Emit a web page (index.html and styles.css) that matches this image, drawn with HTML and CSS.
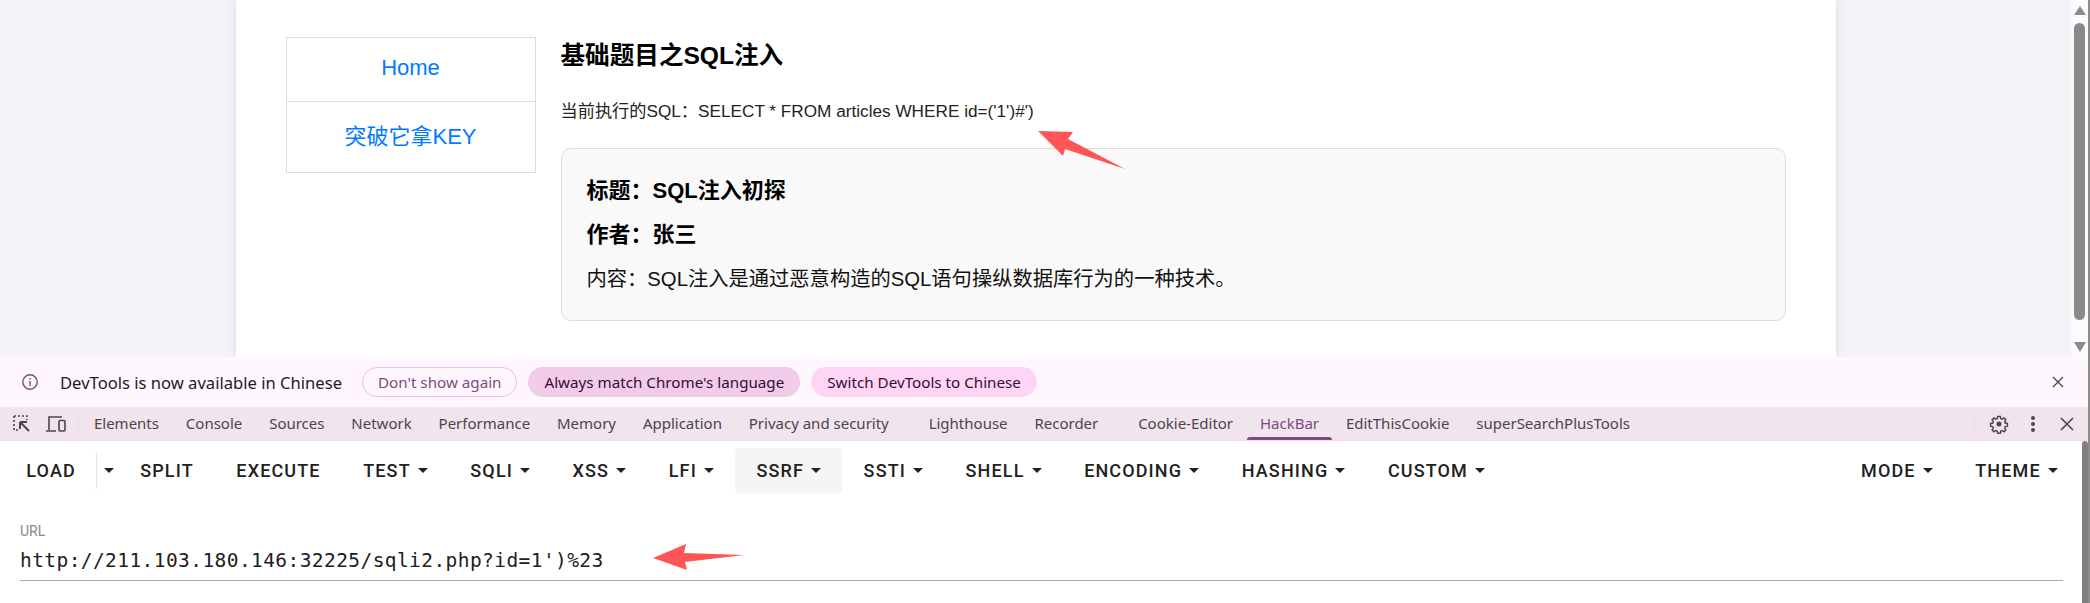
FILE: index.html
```html
<!DOCTYPE html>
<html lang="zh-CN">
<head>
    <meta charset="UTF-8">
    <title>SQL注入</title>
    <link rel="stylesheet" href="styles.css">
</head>
<body>
<div class="viewport">
    <div class="canvas">
        <div class="container">
            <ul class="nav">
                <li><a href="#">Home</a></li>
                <li><a href="#">突破它拿KEY</a></li>
            </ul>
            <div class="main">
                <h2 class="title">基础题目之SQL注入</h2>
                <p class="query">当前执行的SQL：SELECT * FROM articles WHERE id=('1')#')</p>
                <div class="card">
                    <h3>标题：SQL注入初探</h3>
                    <h3>作者：张三</h3>
                    <p>内容：SQL注入是通过恶意构造的SQL语句操纵数据库行为的一种技术。</p>
                </div>
            </div>
        </div>
    </div>
    <div class="pageScroll">
        <i class="arrowUp"></i>
        <i class="thumb"></i>
        <i class="arrowDown"></i>
    </div>
</div>

<div class="devtools">
    <div class="infobar">
        <svg class="infoIcon" width="18" height="18" viewBox="0 0 18 18" fill="none" stroke="#7e4b7e" stroke-width="1.4">
            <circle cx="9" cy="9" r="7.2"/>
            <path d="M9 8v5M9 5v1.6"/>
        </svg>
        <span class="infoText">DevTools is now available in Chinese</span>
        <button class="pill outline">Don't show again</button>
        <button class="pill dark">Always match Chrome's language</button>
        <button class="pill light">Switch DevTools to Chinese</button>
        <svg class="infoClose" width="12" height="12" viewBox="0 0 12 12" stroke="#4d444c" stroke-width="1.3">
            <path d="M1 1l10 10M11 1L1 11"/>
        </svg>
    </div>

    <div class="tabbar">
        <svg class="toolIcon" width="20" height="20" viewBox="0 0 20 20" fill="none" stroke="#4d444c" stroke-width="1.6">
            <path d="M2 2h13v4M2 2v14h4" stroke-dasharray="2 2"/>
            <path d="M8 8h7M8 8v7M8 8l9 9" stroke-width="2"/>
        </svg>
        <svg class="toolIcon device" width="22" height="20" viewBox="0 0 22 20" fill="none" stroke="#4d444c" stroke-width="1.6">
            <path d="M4 16V3h13M1 17h10"/>
            <rect x="14" y="6.5" width="6" height="10.5" rx="1"/>
        </svg>
        <i class="tabSep"></i>
        <a class="tab">Elements</a>
        <a class="tab">Console</a>
        <a class="tab">Sources</a>
        <a class="tab">Network</a>
        <a class="tab">Performance</a>
        <a class="tab">Memory</a>
        <a class="tab">Application</a>
        <a class="tab">Privacy and security</a>
        <a class="tab spaced">Lighthouse</a>
        <a class="tab">Recorder</a>
        <a class="tab spaced">Cookie-Editor</a>
        <a class="tab active">HackBar</a>
        <a class="tab">EditThisCookie</a>
        <a class="tab">superSearchPlusTools</a>
        <i class="tabSep end"></i>
        <svg class="gear" width="20" height="20" viewBox="0 0 24 24" fill="none" stroke="#4d444c" stroke-width="1.9">
            <path d="M10.2 2.5h3.6l.5 2.8 1.9.8 2.3-1.6 2.5 2.5-1.6 2.3.8 1.9 2.8.5v3.6l-2.8.5-.8 1.9 1.6 2.3-2.5 2.5-2.3-1.6-1.9.8-.5 2.8h-3.6l-.5-2.8-1.9-.8-2.3 1.6-2.5-2.5 1.6-2.3-.8-1.9-2.8-.5v-3.6l2.8-.5.8-1.9-1.6-2.3 2.5-2.5 2.3 1.6 1.9-.8z" transform="translate(12 12) scale(.92) translate(-12 -12.4)"/>
            <circle cx="12" cy="12" r="3" fill="#4d444c" stroke="none"/>
        </svg>
        <svg class="dots" width="6" height="18" viewBox="0 0 6 18" fill="#4d444c">
            <circle cx="3" cy="3" r="2"/>
            <circle cx="3" cy="9" r="2"/>
            <circle cx="3" cy="15" r="2"/>
        </svg>
        <svg class="tabClose" width="14" height="14" viewBox="0 0 14 14" stroke="#4d444c" stroke-width="1.6">
            <path d="M1 1l12 12M13 1L1 13"/>
        </svg>
    </div>

    <div class="hackbar">
        <div class="menu">
            <div class="splitBtn">
                <button class="btn load">LOAD</button>
                <button class="btn caretOnly"><i class="caret"></i></button>
            </div>
            <button class="btn">SPLIT</button>
            <button class="btn">EXECUTE</button>
            <button class="btn">TEST<i class="caret"></i></button>
            <button class="btn">SQLI<i class="caret"></i></button>
            <button class="btn">XSS<i class="caret"></i></button>
            <button class="btn">LFI<i class="caret"></i></button>
            <button class="btn hover">SSRF<i class="caret"></i></button>
            <button class="btn">SSTI<i class="caret"></i></button>
            <button class="btn">SHELL<i class="caret"></i></button>
            <button class="btn">ENCODING<i class="caret"></i></button>
            <button class="btn">HASHING<i class="caret"></i></button>
            <button class="btn">CUSTOM<i class="caret"></i></button>
            <div class="menuRight">
                <button class="btn">MODE<i class="caret"></i></button>
                <button class="btn">THEME<i class="caret"></i></button>
            </div>
        </div>
        <div class="field">
            <label>URL</label>
            <div class="urlInput">http://211.103.180.146:32225/sqli2.php?id=1')%23</div>
        </div>
        <i class="hackScroll"></i>
    </div>
</div>

<svg class="marks" width="2090" height="603" viewBox="0 0 2090 603" fill="#ff5555">
    <polygon points="1038,131 1073,132 1068,139 1125,169 1065,149 1063,156"/>
    <polygon points="653,558 686,544 684,553 744,555 685,562 687,570"/>
</svg>
</body>
</html>
```

FILE: styles.css
```css
* {
    box-sizing: border-box;
}

html, body {
    margin: 0;
    height: 603px;
    overflow: hidden;
}

body {
    display: flex;
    flex-direction: column;
    border-right: 2px solid #8c8c8c;
    font-family: "Liberation Sans", "Noto Sans CJK SC", sans-serif;
    position: relative;
    background: #fff;
}

i {
    display: block;
}

/* page */
.viewport {
    display: flex;
    height: 357px;
    flex: none;
}

.canvas {
    flex: 1;
    background: #f3f3f8;
    overflow: hidden;
}

.container {
    width: 1600px;
    height: 357px;
    margin: 0 auto;
    padding: 37px 50px 0;
    background: #fff;
    box-shadow: 0 0 10px rgba(0, 0, 0, 0.1);
    display: flex;
    gap: 25px;
}

.nav {
    width: 250px;
    height: 136px;
    margin: 0;
    padding: 0;
    list-style: none;
    border: 1px solid #ddd;
    flex: none;
}

.nav li {
    text-align: center;
    font-size: 22px;
}

.nav li:first-child {
    height: 64px;
    line-height: 59px;
    border-bottom: 1px solid #ddd;
}

.nav li:last-child {
    line-height: 70px;
}

.nav a {
    color: #007bff;
    text-decoration: none;
}

.main {
    flex: 1;
}

.title {
    margin: 0;
    font-size: 24.6px;
    line-height: 38px;
    color: #000;
}

.query {
    margin: 18px 0 0;
    font-size: 17.2px;
    line-height: 36px;
    color: #222;
}

.card {
    margin-top: 19px;
    height: 173px;
    padding: 26px 25px;
    background: #f9f9f9;
    border: 1px solid #ddd;
    border-radius: 10px;
}

.card h3 {
    margin: 0 0 12px;
    font-size: 22px;
    line-height: 32px;
    color: #000;
}

.card p {
    margin: 0;
    font-size: 20.3px;
    line-height: 32px;
    color: #111;
}

.pageScroll {
    width: 17px;
    flex: none;
    background: #fbfbfd;
    display: flex;
    flex-direction: column;
    align-items: center;
    padding: 6px 0 5px;
}

.arrowUp {
    border: 6px solid transparent;
    border-top: 0;
    border-bottom: 9px solid #8a8a8a;
}

.arrowDown {
    border: 6px solid transparent;
    border-bottom: 0;
    border-top: 10px solid #8a8a8a;
}

.thumb {
    width: 11px;
    flex: 1;
    margin: 8px 0 22px;
    border-radius: 6px;
    background: #8a8a8a;
}

/* devtools */
.devtools {
    flex: 1;
    font-family: "Noto Sans", sans-serif;
}

.infobar {
    height: 50px;
    background: #fef7fd;
    display: flex;
    align-items: center;
    padding: 0 24px 0 21px;
}

.infoText {
    margin-left: 21px;
    font-size: 16.6px;
    color: #1f1a1f;
}

.infoClose {
    margin-left: auto;
}

.pill {
    height: 30px;
    padding: 0 15px;
    border: 1px solid transparent;
    border-radius: 15px;
    font-family: "Noto Sans", sans-serif;
    font-size: 15.2px;
    color: #3a0a35;
    margin-left: 11px;
}

.pill.outline {
    margin-left: 20px;
    border-color: #f7b8e6;
    background: transparent;
    color: #7e4b7e;
}

.pill.dark {
    background: #f0cce8;
}

.pill.light {
    background: #fdd5f5;
}

.tabbar {
    height: 34px;
    background: #f0e4ed;
    border-bottom: 1px solid #fcd4f2;
    display: flex;
    align-items: center;
    padding: 0 14px 0 12px;
}

.toolIcon.device {
    margin-left: 13px;
}

.tabSep {
    width: 1px;
    height: 22px;
    margin: 0 1.5px 0 11px;
    background: #f7d6ee;
}

.tabSep.end {
    margin: 0 0 0 auto;
}

.tab {
    height: 33px;
    line-height: 32px;
    padding: 0 13.45px;
    font-size: 15px;
    color: #4d444c;
    position: relative;
}

.tab.spaced {
    margin-left: 13px;
}

.tab.active {
    color: #7e4b7e;
}

.tab.active::after {
    content: "";
    position: absolute;
    left: 0;
    right: 0;
    bottom: 0;
    height: 3px;
    border-radius: 3px 3px 0 0;
    background: #7e4b7e;
}

.gear {
    margin-left: 14px;
}

.dots {
    margin-left: 21px;
}

.tabClose {
    margin-left: 24px;
}

/* hackbar */
.hackbar {
    position: relative;
    height: 162px;
    padding-top: 7px;
    font-family: Roboto, sans-serif;
}

.menu {
    display: flex;
    align-items: center;
    padding: 0 5px;
}

.splitBtn {
    display: flex;
    align-items: center;
}

.btn {
    height: 45px;
    padding: 0 21.3px;
    border: 0;
    border-radius: 4px;
    background: transparent;
    display: flex;
    align-items: center;
    font-family: Roboto, sans-serif;
    font-weight: 500;
    font-size: 18px;
    letter-spacing: 1.13px;
    color: #212121;
}

.btn.load {
    height: 40px;
    padding-right: 20px;
    border-right: 1px solid #e6e6e6;
}

.btn.caretOnly {
    padding: 0 5px 0 7px;
}

.btn.hover {
    background: #f5f5f5;
}

.caret {
    width: 0;
    height: 0;
    margin-left: 7px;
    border: 5px solid transparent;
    border-top: 5px solid #212121;
    border-bottom: 0;
}

.caretOnly .caret {
    margin-left: 0;
}

.menuRight {
    display: flex;
    margin-left: auto;
    padding-right: 4px;
}

.field {
    margin: 28px 25px 0 20px;
    border-bottom: 1px solid #aaa;
    height: 60px;
}

.field label {
    display: block;
    font-size: 14px;
    line-height: 20px;
    color: #888;
}

.urlInput {
    font-family: "DejaVu Sans Mono", "Liberation Mono", monospace;
    font-size: 19.5px;
    letter-spacing: 0.42px;
    line-height: 32px;
    margin-top: 4px;
    color: #212121;
}

.hackScroll {
    position: absolute;
    top: 0;
    right: 0;
    bottom: 0;
    width: 6px;
    border-radius: 3px 3px 0 0;
    background: #808080;
}

.marks {
    position: absolute;
    top: 0;
    left: 0;
    pointer-events: none;
}
```
